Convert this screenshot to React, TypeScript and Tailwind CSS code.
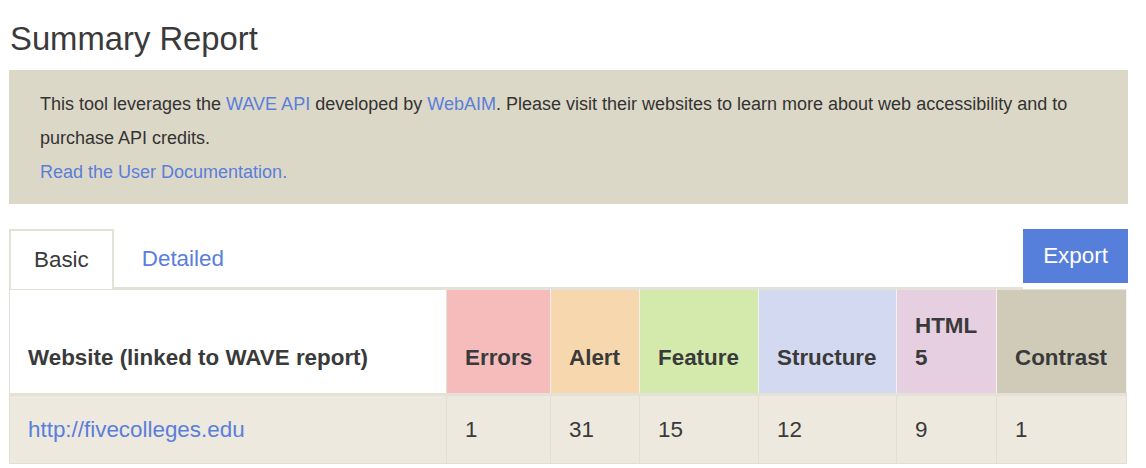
import React from 'react';

const cols = [
  { label: 'Errors', bg: 'bg-[#f6bcbc]', w: 'w-[104px]', value: 1 },
  { label: 'Alert', bg: 'bg-[#f7d8ae]', w: 'w-[89px]', value: 31 },
  { label: 'Feature', bg: 'bg-[#d4eaad]', w: 'w-[119px]', value: 15 },
  { label: 'Structure', bg: 'bg-[#d3d9f1]', w: 'w-[138px]', value: 12 },
  { label: 'HTML 5', bg: 'bg-[#e5cfe0]', w: 'w-[100px]', value: 9 },
  { label: 'Contrast', bg: 'bg-[#cfcbb8]', w: 'w-[130px]', value: 1 },
];

const App: React.FC = () => {
  return (
    <div className="w-[1146px] h-[468px] overflow-hidden bg-white font-['Liberation_Sans',Arial,sans-serif] text-[#3a3a3a]">
      <div className="ml-[9px] w-[1119px]">
        <h1 className="pt-5 pb-[13px] pl-px text-[32.8px] leading-[37px] font-normal">Summary Report</h1>

        {/* Info box */}
        <div className="bg-[#dcd8c7] px-[31px] pt-[17px] pb-[15px] text-[18px] leading-[34px] text-[#333]">
          <p>
            <span>This tool leverages the </span>
            <a className="text-[#5a7edb]">WAVE API</a>
            <span> developed by </span>
            <a className="text-[#5a7edb]">WebAIM</a>
            <span>. Please visit their websites to learn more about web accessibility and to</span>{' '}
            <span>purchase API credits.</span>
          </p>
          <p>
            <a className="text-[#5a7edb]">Read the User Documentation.</a>
          </p>
        </div>

        {/* Tabs + export */}
        <div className="mt-[25px] flex items-start">
          <div className="flex-1 flex h-[60px] border-b-2 border-[#e4e1d7]">
            <div className="h-[60px] -mb-[2px] flex items-center border-2 border-b-0 border-[#e4e1d7] bg-white px-[23px] text-[22.4px] text-[#3a3a3a]">
              Basic
            </div>
            <div className="h-[60px] ml-[2px] flex items-center border-2 border-transparent px-[24px] text-[22.4px] text-[#5a7edb]">
              Detailed
            </div>
          </div>
          <button className="w-[105px] h-[54px] bg-[#567edb] text-white text-[22.4px] flex items-center justify-center">
            Export
          </button>
        </div>

        {/* Table */}
        <table className="w-[1117px] table-fixed border-collapse text-[22.4px] leading-[31.4px]">
          <thead>
            <tr>
              <th className="w-[437px] h-[105px] border border-b-[3px] border-[#e4e1d7] bg-white px-[18px] pb-[20px] align-bottom text-left font-bold">
                Website (linked to WAVE report)
              </th>
              {cols.map((c) => (
                <th
                  key={c.label}
                  className={`${c.w} ${c.bg} h-[105px] border border-b-[3px] border-x-[#f3f1ec] border-t-[#e4e1d7] border-b-[#e4e1d7] px-[18px] pb-[20px] align-bottom text-left font-bold`}
                >
                  {c.label}
                </th>
              ))}
            </tr>
          </thead>
          <tbody>
            <tr className="bg-[#ede9de]">
              <td className="h-[69px] border border-[#e2ded3] px-[18px] align-middle">
                <a className="text-[#5a7edb]">http://fivecolleges.edu</a>
              </td>
              {cols.map((c) => (
                <td key={c.label} className="h-[69px] border border-[#e2ded3] px-[18px] align-middle">
                  {c.value}
                </td>
              ))}
            </tr>
          </tbody>
        </table>
      </div>
    </div>
  );
};

export default App;
